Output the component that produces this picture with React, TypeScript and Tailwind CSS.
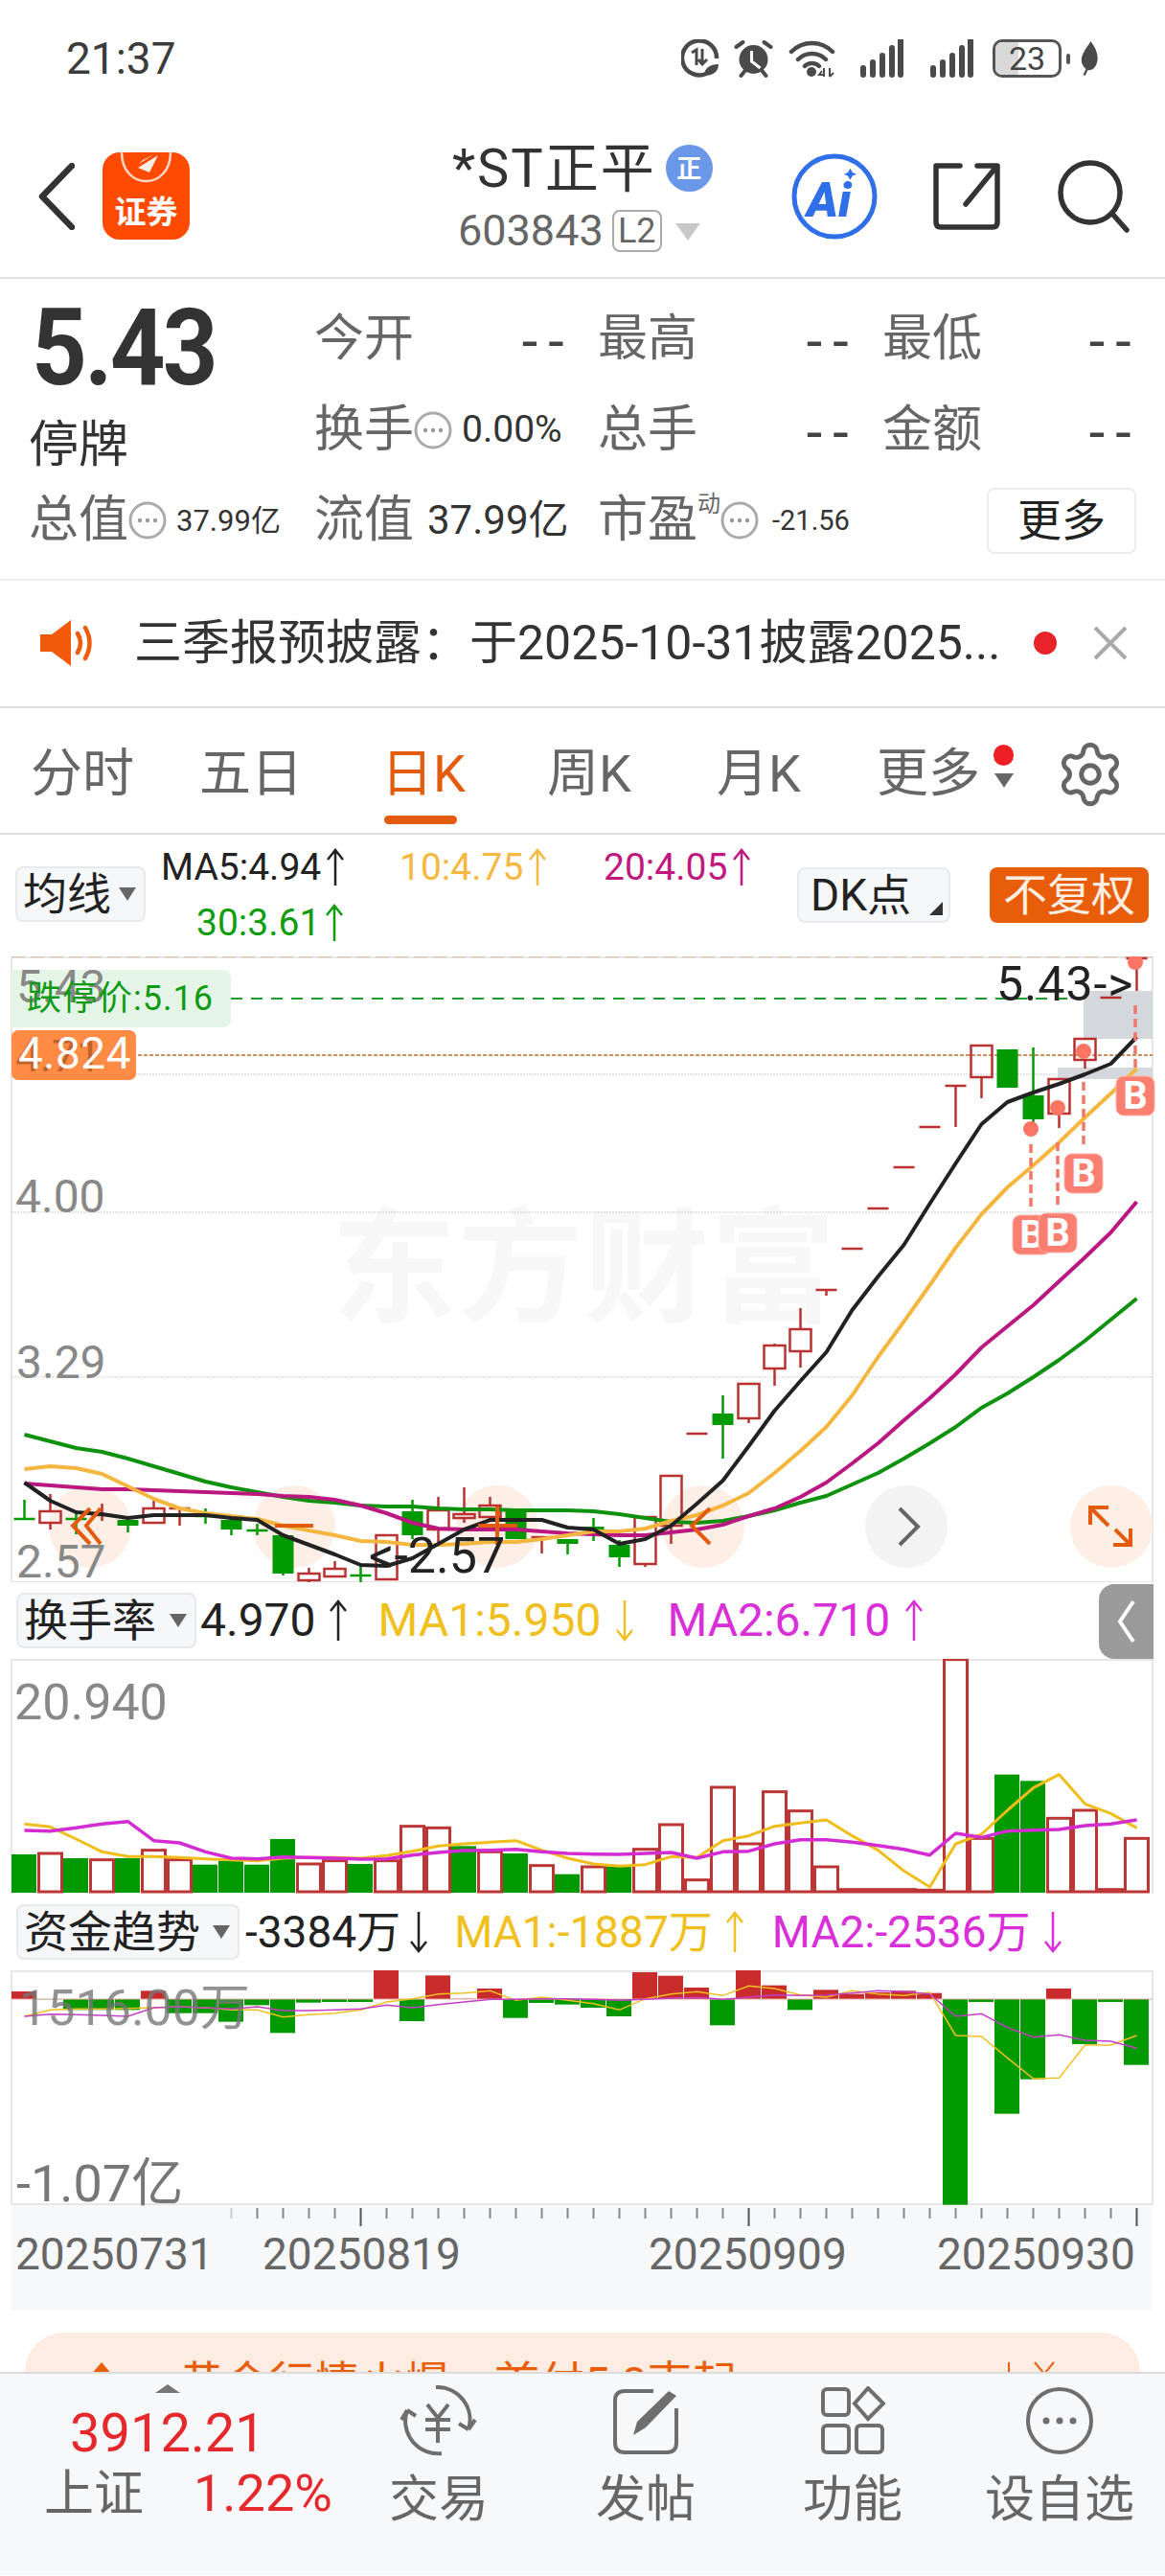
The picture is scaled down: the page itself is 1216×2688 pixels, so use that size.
import { Settings } from "lucide-react";

const RED = "#b83232";
const GREEN = "#009900";
const cx = (i: number) => 25.5 + 27 * i;
const line = (ys: number[]) => ys.map((y, i) => `${cx(i)},${y}`).join(" ");

// body top, body bottom, wick top, wick bottom, colour
const candles: [number, number, number, number, "r" | "g"][] = [
  [1586, 1586, 1566, 1586, "g"], [1578, 1590, 1560, 1597, "r"], [1586, 1586, 1577, 1602, "g"], [1582, 1582, 1570, 1588, "r"],
  [1587, 1593, 1587, 1600, "g"], [1575, 1590, 1567, 1590, "r"], [1575, 1577, 1575, 1593, "r"], [1583, 1583, 1575, 1591, "g"],
  [1587, 1597, 1587, 1603, "g"], [1598, 1598, 1591, 1603, "g"], [1603, 1643, 1603, 1645, "g"], [1643, 1650, 1637, 1653, "r"],
  [1638, 1646, 1630, 1646, "r"], [1645, 1645, 1635, 1653, "g"], [1603, 1649, 1603, 1649, "r"], [1578, 1603, 1566, 1607, "g"],
  [1577, 1597, 1563, 1612, "r"], [1581, 1585, 1553, 1590, "r"], [1572, 1584, 1563, 1584, "r"], [1577, 1607, 1577, 1607, "g"],
  [1605, 1605, 1605, 1622, "r"], [1607, 1612, 1607, 1623, "g"], [1594, 1598, 1585, 1609, "g"], [1613, 1626, 1608, 1636, "g"],
  [1584, 1633, 1584, 1636, "r"], [1541, 1593, 1541, 1612, "r"], [1497, 1497, 1497, 1497, "r"], [1476, 1488, 1457, 1523, "g"],
  [1445, 1481, 1445, 1486, "r"], [1405, 1429, 1403, 1447, "r"], [1388, 1411, 1366, 1428, "r"], [1347, 1347, 1347, 1353, "r"],
  [1304, 1304, 1304, 1304, "r"], [1262, 1262, 1262, 1262, "r"], [1219, 1219, 1219, 1219, "r"], [1177, 1177, 1177, 1177, "r"],
  [1134, 1134, 1134, 1177, "r"], [1092, 1125, 1092, 1147, "r"], [1096, 1136, 1096, 1136, "g"], [1144, 1169, 1094, 1180, "g"],
  [1127, 1163, 1127, 1178, "r"], [1085, 1107, 1085, 1116, "r"], [1042, 1042, 1042, 1042, "r"], [1001, 1001, 1001, 1035, "r"],
];

const ma5 = [1548, 1567, 1579, 1581, 1585, 1582, 1582, 1582, 1585, 1587, 1603, 1613, 1623, 1634, 1635, 1627, 1612, 1597, 1587, 1587, 1587, 1595, 1597, 1612, 1607, 1593, 1570, 1546, 1510, 1473, 1442, 1412, 1368, 1333, 1300, 1257, 1215, 1174, 1151, 1141, 1132, 1122, 1111, 1083];
const ma10 = [1534, 1531, 1533, 1539, 1552, 1565, 1575, 1580, 1583, 1586, 1593, 1598, 1603, 1609, 1610, 1613, 1613, 1612, 1610, 1610, 1607, 1603, 1599, 1599, 1596, 1588, 1582, 1572, 1559, 1538, 1515, 1490, 1457, 1417, 1380, 1342, 1303, 1268, 1240, 1217, 1193, 1167, 1142, 1116];
const ma20 = [1549, 1551, 1553, 1555, 1555, 1556, 1557, 1558, 1559, 1560, 1562, 1563, 1566, 1572, 1580, 1590, 1596, 1597, 1597, 1597, 1599, 1601, 1602, 1603, 1603, 1600, 1597, 1592, 1583, 1575, 1563, 1548, 1528, 1507, 1483, 1460, 1435, 1407, 1385, 1363, 1338, 1313, 1287, 1255];
const ma30 = [1498, 1505, 1512, 1516, 1523, 1531, 1539, 1547, 1553, 1558, 1563, 1567, 1569, 1572, 1573, 1573, 1575, 1576, 1576, 1577, 1577, 1577, 1578, 1581, 1585, 1589, 1590, 1588, 1583, 1577, 1569, 1562, 1550, 1538, 1523, 1507, 1490, 1470, 1455, 1438, 1420, 1400, 1378, 1356];

const volBars: [number, "r" | "g"][] = [
  [858, "g"], [855, "r"], [870, "g"], [875, "r"], [870, "g"], [845, "r"], [875, "r"], [890, "g"], [878, "g"], [890, "g"], [810, "g"],
  [888, "r"], [878, "r"], [888, "g"], [878, "r"], [770, "r"], [775, "r"], [832, "g"], [850, "r"], [855, "g"], [893, "r"], [920, "g"],
  [897, "r"], [895, "g"], [842, "r"], [765, "r"], [938, "r"], [648, "r"], [825, "r"], [662, "r"], [722, "r"], [897, "r"], [968, "r"],
  [968, "r"], [968, "r"], [970, "r"], [248, "r"], [808, "r"], [608, "g"], [628, "g"], [745, "r"], [720, "r"], [968, "r"], [808, "r"],
];
const volY = [763, 772, 810, 850, 865, 865, 868, 872, 875, 878, 870, 868, 868, 870, 862, 848, 832, 825, 820, 815, 845, 870, 888, 895, 890, 865, 868, 815, 800, 770, 760, 750, 800, 845, 910, 960, 825, 795, 720, 650, 608, 700, 730, 775];
const volM = [783, 785, 775, 763, 755, 815, 822, 850, 870, 872, 866, 868, 870, 873, 872, 860, 852, 846, 845, 842, 850, 855, 857, 858, 855, 852, 870, 850, 848, 825, 812, 812, 820, 830, 842, 860, 792, 805, 785, 782, 780, 768, 763, 750];

const fundBars = [267, 292, 325, 325, 325, 265, 335, 335, 362, 310, 397, 302, 300, 300, 200, 360, 217, 290, 258, 350, 303, 308, 318, 345, 207, 218, 255, 373, 200, 248, 325, 262, 275, 270, 265, 272, 935, 300, 650, 542, 258, 432, 300, 497];
const fundY = [345, 325, 322, 322, 320, 318, 315, 318, 325, 325, 347, 340, 335, 325, 300, 290, 275, 272, 265, 295, 285, 295, 305, 325, 290, 275, 268, 280, 250, 258, 278, 285, 265, 275, 280, 270, 405, 408, 475, 540, 538, 435, 435, 405];
const fundM = [345, 338, 340, 342, 345, 318, 315, 318, 322, 315, 327, 327, 325, 322, 310, 318, 308, 300, 292, 292, 290, 290, 292, 295, 292, 288, 286, 292, 285, 278, 280, 278, 272, 265, 268, 275, 345, 337, 380, 410, 403, 420, 423, 445];

function Arrow({ color, down, h = 40, className }: { color: string; down?: boolean; h?: number; className?: string }) {
  return (
    <svg width="22" height={h} viewBox={`0 0 22 ${h}`} className={`shrink-0 ${className ?? ""}`}>
      <path
        d={down ? `M11 1V${h - 2}M3 ${h - 12}L11 ${h - 2}L19 ${h - 12}` : `M11 ${h - 1}V2M3 12L11 2L19 12`}
        fill="none"
        stroke={color}
        strokeWidth="2.5"
      />
    </svg>
  );
}

function Info() {
  return (
    <svg width="40" height="46" viewBox="0 0 40 46" className="shrink-0">
      <ellipse cx="20" cy="23" rx="18" ry="18" fill="none" stroke="#aaa" strokeWidth="3" />
      <circle cx="12" cy="23" r="2.2" fill="#999" />
      <circle cx="20" cy="23" r="2.2" fill="#999" />
      <circle cx="28" cy="23" r="2.2" fill="#999" />
    </svg>
  );
}

function Dashes() {
  return <span className="font-['Liberation_Sans',sans-serif] text-[58px] leading-none tracking-[8px] text-[#444] -mr-[8px]">--</span>;
}

function Signal() {
  return (
    <svg width="49" height="40" viewBox="0 0 47 40">
      {[[4, 30], [14, 24], [24, 17], [34, 9], [43, 1]].map(([x, y]) => (
        <path key={x} d={`M${x} ${y}V37`} stroke="#4a4a4a" strokeWidth="6" strokeLinecap="round" />
      ))}
    </svg>
  );
}

function StatusBar() {
  return (
    <div className="flex h-[100px] items-start justify-between pl-[69px] pr-[69px] pt-[41px]">
      <span className="text-[46px] leading-[41px] text-[#3c3c3c]">21:37</span>
      <div className="flex items-center">
        <svg width="40" height="40" viewBox="0 0 40 40">
          <path d="M26 36A18 18 0 1 1 37 20" fill="none" stroke="#4a4a4a" strokeWidth="4.5" />
          <path d="M11 14l5-3v16M22 10v16M18 21l4 5 5-5" fill="none" stroke="#4a4a4a" strokeWidth="3" />
          <path d="M24 38c0-8 6-12 15-12 0 8-6 12-15 12z" fill="#4a4a4a" />
        </svg>
        <svg width="41" height="40" viewBox="0 0 40 40" className="ml-[15px]">
          <circle cx="20" cy="21" r="15" fill="#4a4a4a" />
          <path d="M18 12V23L27 30" fill="none" stroke="#fff" strokeWidth="3" />
          <path d="M2 8l7-5M38 8l-7-5M7 38l4-5M33 38l-4-5" stroke="#4a4a4a" strokeWidth="4" strokeLinecap="round" />
        </svg>
        <svg width="49" height="40" viewBox="0 0 47 40" className="ml-[16px]">
          <path d="M2 13C14 1 33 1 45 13M9 21C17 13 30 13 38 21M16 28C20 24 27 24 31 28" fill="none" stroke="#4a4a4a" strokeWidth="4.5" strokeLinecap="round" />
          <circle cx="23" cy="34" r="5" fill="#4a4a4a" />
          <path d="M34 33l-3 4h4M36 30v9M42 30v9M42 39l4-4" fill="none" stroke="#4a4a4a" strokeWidth="2" />
        </svg>
        <div className="ml-[24px] flex">
          <Signal />
        </div>
        <div className="ml-[24px] flex">
          <Signal />
        </div>
        <div className="relative ml-[18px] flex h-[40px] w-[72px] items-center justify-center overflow-hidden rounded-[10px] border-[3px] border-[#555]">
          <div className="absolute inset-y-0 left-0 w-[24px] bg-[#d9d9d9]" />
          <span className="relative text-[34px] leading-none text-[#444]">23</span>
        </div>
        <div className="ml-[5px] h-[11px] w-[4px] rounded-full bg-[#555]" />
        <svg width="20" height="36" viewBox="0 0 19 36" className="ml-[10px]">
          <path d="M11 0C17 8 20 16 17 24C15 29 11 31 8 30L5 36L3 35L6 29C1 25 0 19 3 13C5 8 8 5 11 0Z" fill="#4a4a4a" />
        </svg>
      </div>
    </div>
  );
}

function Header() {
  return (
    <div className="flex h-[191px] items-center border-b-2 border-[#e3e3e3] pt-[20px]">
      <svg width="38" height="70" viewBox="0 0 38 70" className="ml-[40px]">
        <path d="M35 3L4 35L35 67" fill="none" stroke="#333" strokeWidth="6.5" strokeLinecap="round" strokeLinejoin="round" />
      </svg>
      <div className="relative ml-[29px] flex h-[91px] w-[91px] items-end justify-center overflow-hidden rounded-[18px] bg-[#ff4a00] pb-[12px] text-[33px] font-bold leading-none text-white">
        <svg width="91" height="40" viewBox="0 0 91 40" className="absolute left-0 top-0">
          <path d="M20 0C20 40 71 40 71 0" fill="none" stroke="#ffd9c7" strokeWidth="2.5" />
          <path d="M37 16L58 3L49 21ZM42 8L54 2L38 12Z" fill="#fff" opacity="0.9" />
        </svg>
        证券
      </div>
      <div className="ml-[274px] flex w-[275px] flex-col">
        <div className="flex items-center">
          <span className="text-[56px] leading-[60px] tracking-[2px] text-[#333]">*ST正平</span>
          <span className="ml-[10px] flex h-[49px] w-[49px] items-center justify-center rounded-full bg-[#6b97e8] text-[26px] font-bold leading-none text-white">正</span>
        </div>
        <div className="mt-[12px] flex items-center pl-[6px]">
          <span className="text-[45px] leading-[46px] text-[#666]">603843</span>
          <span className="ml-[9px] flex h-[44px] w-[52px] items-center justify-center rounded-[8px] border-2 border-[#aaa] text-[36px] leading-none text-[#666]">L2</span>
          <svg width="26" height="18" viewBox="0 0 26 18" className="ml-[14px] mt-[2px]">
            <path d="M0 0H26L13 18Z" fill="#c8c8c8" />
          </svg>
        </div>
      </div>
      <svg width="92" height="92" viewBox="0 0 92 92" className="ml-[78px]">
        <circle cx="46" cy="46" r="42" fill="none" stroke="#2f6fe8" strokeWidth="5" />
        <text x="17" y="67" fontSize="50" fontWeight="900" fontStyle="italic" fill="#2f6fe8" fontFamily="Roboto, sans-serif">Ai</text>
        <path d="M64 18L68 25L75 28L68 31L64 38L60 31L53 28L60 25Z" fill="#2f6fe8" transform="translate(24 6) scale(0.6)" />
      </svg>
      <svg width="73" height="72" viewBox="0 0 73 72" className="ml-[55px]">
        <path d="M30 4H5V63Q5 68 10 68H64Q69 68 69 63V4H48M68 5L36 44" fill="none" stroke="#333" strokeWidth="5.5" strokeLinecap="round" strokeLinejoin="round" />
      </svg>
      <svg width="78" height="76" viewBox="0 0 78 76" className="ml-[58px]">
        <circle cx="35" cy="34" r="31" fill="none" stroke="#333" strokeWidth="5.5" />
        <path d="M58 56L73 73" stroke="#333" strokeWidth="5.5" strokeLinecap="round" />
      </svg>
    </div>
  );
}

function Quote() {
  const label = "text-[52px] leading-none text-[#666]";
  return (
    <div className="grid h-[315px] grid-cols-[298px_296px_297px_265px] grid-rows-[94px_95px_94px] border-b-2 border-[#efefef] pl-[30px] pt-[16px]">
      <div className="row-span-2 flex flex-col">
        <span className="ml-[3px] mt-[6px] origin-left scale-x-[0.9] text-[112px] font-bold leading-[100px] tracking-[-3px] text-[#333]">5.43</span>
        <span className="mt-[22px] text-[52px] leading-[60px] text-[#333]">停牌</span>
      </div>
      <div className="flex w-[262px] items-center justify-between">
        <span className={label}>今开</span>
        <Dashes />
      </div>
      <div className="flex w-[263px] items-center justify-between">
        <span className={label}>最高</span>
        <Dashes />
      </div>
      <div className="flex w-[261px] items-center justify-between">
        <span className={label}>最低</span>
        <Dashes />
      </div>
      <div className="col-start-2 flex w-[264px] items-center">
        <span className={label}>换手</span>
        <Info />
        <span className="ml-[10px] text-[39px] leading-none text-[#333]">0.00%</span>
      </div>
      <div className="flex w-[263px] items-center justify-between">
        <span className={label}>总手</span>
        <Dashes />
      </div>
      <div className="flex w-[261px] items-center justify-between">
        <span className={label}>金额</span>
        <Dashes />
      </div>
      <div className="flex items-center">
        <span className={label}>总值</span>
        <Info />
        <span className="ml-[10px] text-[31px] leading-none text-[#333]">37.99亿</span>
      </div>
      <div className="flex items-center">
        <span className={label}>流值</span>
        <span className="ml-[14px] text-[42px] leading-none text-[#333]">37.99亿</span>
      </div>
      <div className="flex items-center">
        <span className={label}>市盈</span>
        <span className="mb-[34px] text-[24px] leading-none text-[#666]">动</span>
        <Info />
        <span className="ml-[14px] text-[29px] leading-none text-[#333]">-21.56</span>
      </div>
      <div className="flex items-center justify-end">
        <span className="flex h-[69px] w-[156px] items-center justify-center rounded-[8px] border-2 border-[#ececec] text-[46px] leading-none text-[#222]">更多</span>
      </div>
    </div>
  );
}

function Notice() {
  return (
    <div className="flex h-[133px] items-center border-b-2 border-[#dedede] pb-[2px]">
      <svg width="58" height="50" viewBox="0 0 58 50" className="ml-[42px]">
        <path d="M0 16H12L32 1V49L12 34H0Z" fill="#f15a0a" />
        <path d="M39 15Q45 25 39 35M47 9Q56 25 47 41" fill="none" stroke="#f15a0a" strokeWidth="4.5" strokeLinecap="round" />
      </svg>
      <span className="ml-[40px] w-[939px] whitespace-nowrap text-[50px] leading-none text-[#333]">三季报预披露：于2025-10-31披露2025...</span>
      <span className="mr-[37px] h-[24px] w-[24px] rounded-full bg-[#e8232a]" />
      <svg width="38" height="38" viewBox="0 0 38 38">
        <path d="M3 3L35 35M35 3L3 35" stroke="#aaa" strokeWidth="4" />
      </svg>
    </div>
  );
}

function Tabs() {
  const tab = "text-[54px] leading-none text-[#666]";
  return (
    <div className="flex h-[132px] items-center border-b-2 border-[#dedede] pl-[32px] pt-[8px]">
      <span className={`${tab} w-[176px]`}>分时</span>
      <span className={`${tab} w-[190px]`}>五日</span>
      <span className="relative w-[173px] text-[54px] leading-none text-[#e35b0c]">
        日K
        <span className="absolute left-[3px] top-[70px] h-[9px] w-[76px] rounded-full bg-[#e35b0c]" />
      </span>
      <span className={`${tab} w-[177px]`}>周K</span>
      <span className={`${tab} w-[167px]`}>月K</span>
      <span className={`${tab} w-[122px]`}>更多</span>
      <span className="mb-[18px] flex w-[21px] flex-col items-center">
        <span className="mb-[8px] h-[22px] w-[21px] rounded-full bg-[#ee2024]" />
        <svg width="20" height="15" viewBox="0 0 20 15">
          <path d="M0 0H20L10 15Z" fill="#666" />
        </svg>
      </span>
      <Settings size={74} strokeWidth={1.6} color="#666" className="ml-[43px]" />
    </div>
  );
}

function Dropdown({ label, w }: { label: string; w: string }) {
  return (
    <div className={`flex h-[58px] items-center justify-between rounded-[8px] border-2 border-[#e8e9ec] bg-[#f6f7f9] pl-[6px] pr-[8px] ${w}`}>
      <span className="text-[46px] leading-none text-[#222]">{label}</span>
      <svg width="18" height="14" viewBox="0 0 18 14">
        <path d="M0 0H18L9 14Z" fill="#666" />
      </svg>
    </div>
  );
}

function MaLegend() {
  return (
    <div className="flex h-[127px] pl-[16px]">
      <div className="mt-[33px]">
        <Dropdown label="均线" w="w-[136px]" />
      </div>
      <div className="ml-[16px] mt-[14px] flex w-[664px] flex-col gap-[18px] text-[39px] leading-[40px]">
        <div className="flex">
          <span className="flex w-[249px] items-center text-[#222]">MA5:4.94<Arrow color="#222" className="ml-[4px]" /></span>
          <span className="flex w-[213px] items-center text-[#f5b942]">10:4.75<Arrow color="#f5b942" className="ml-[4px]" /></span>
          <span className="flex items-center text-[#c0187e]">20:4.05<Arrow color="#c0187e" className="ml-[4px]" /></span>
        </div>
        <div className="ml-[37px] flex">
          <span className="flex items-center text-[#0f9d0f]">30:3.61<Arrow color="#0f9d0f" className="ml-[4px]" /></span>
        </div>
      </div>
      <div className="relative mt-[34px] flex h-[58px] w-[160px] items-center rounded-[8px] border-2 border-[#e8e9ec] bg-[#f6f7f9] pl-[12px] text-[46px] leading-none text-[#222]">
        DK点
        <svg width="14" height="14" viewBox="0 0 14 14" className="absolute bottom-[6px] right-[6px]">
          <path d="M14 0V14H0Z" fill="#333" />
        </svg>
      </div>
      <div className="ml-[41px] mt-[34px] flex h-[58px] w-[166px] items-center justify-center rounded-[8px] bg-[#e85d0a] text-[46px] leading-none text-[#fdeee3]">不复权</div>
    </div>
  );
}

function MainChart() {
  const badges = [
    { x: 1076, dotY: 1179, dash: [1195, 1263], box: [1057, 1269] },
    { x: 1104, dotY: 1157, dash: [1193, 1262], box: [1084, 1267] },
    { x: 1131, dotY: 1098, dash: [1130, 1198], box: [1111, 1205] },
    { x: 1185, dotY: 1005, dash: [1050, 1117], box: [1165, 1124] },
  ];
  return (
    <div className="relative h-[653px] w-full">
      <span className="absolute left-[346px] top-[252px] whitespace-nowrap text-[130px] font-bold leading-[150px] tracking-[2px] text-[#f7f7f7]">东方财富</span>
      <svg viewBox="0 999 1216 653" className="absolute inset-0 h-full w-full">
        <path d="M12 1652V1000H1203V1652H12" fill="none" stroke="#e6e6e6" strokeWidth="2" />
        <path d="M12 999.5H1203" stroke="#d9c4b0" strokeWidth="1.5" strokeDasharray="14 6" />
        {[1122, 1266, 1438].map((y) => (
          <path key={y} d={`M12 ${y}H1203`} stroke="#cfcfcf" strokeWidth="1" strokeDasharray="2 1" />
        ))}
        <path d="M241 1043H1203" stroke="#1e9a2e" strokeWidth="2" strokeDasharray="12 9" />
        <path d="M12 1102H1203" stroke="#c0692a" strokeWidth="1.5" strokeDasharray="4 2" />
        <rect x="1131" y="1035" width="72" height="50" fill="#d4d7dc" />
        <rect x="1104" y="1115" width="99" height="12" fill="#d4d7dc" />
        {[94, 307, 519, 734, 1160].map((x) => (
          <circle key={x} cx={x} cy="1594" r="43" fill="#fdeee6" />
        ))}
        <circle cx="946" cy="1594" r="43" fill="#f3f3f3" />
        {candles.map(([top, bottom, hi, lo, c], i) => {
          const x = cx(i);
          const stroke = c === "r" ? RED : GREEN;
          const flat = bottom - top < 3;
          return (
            <g key={i}>
              {hi < top && <path d={`M${x} ${hi}V${top}`} stroke={stroke} strokeWidth="2.5" />}
              {lo > bottom && <path d={`M${x} ${bottom}V${lo}`} stroke={stroke} strokeWidth="2.5" />}
              {flat ? (
                <path d={`M${x - 11} ${top}H${x + 11}`} stroke={stroke} strokeWidth="2.5" />
              ) : c === "r" ? (
                <rect x={x - 11} y={top} width="22" height={bottom - top} fill="none" stroke={stroke} strokeWidth="2.5" />
              ) : (
                <rect x={x - 11} y={top} width="22" height={bottom - top} fill={stroke} />
              )}
            </g>
          );
        })}
        <polyline points={line(ma30)} fill="none" stroke="#0e920e" strokeWidth="4" strokeLinejoin="round" />
        <polyline points={line(ma20)} fill="none" stroke="#ba1780" strokeWidth="4" strokeLinejoin="round" />
        <polyline points={line(ma10)} fill="none" stroke="#f5b63f" strokeWidth="4" strokeLinejoin="round" />
        <polyline points={line(ma5)} fill="none" stroke="#222" strokeWidth="4" strokeLinejoin="round" />
        {badges.map((b) => (
          <g key={b.x}>
            <circle cx={b.x} cy={b.dotY} r="8" fill="#fb7464" />
            <path d={`M${b.x} ${b.dash[0]}V${b.dash[1]}`} stroke="#f2786a" strokeWidth="3.5" strokeDasharray="9 5" />
            <rect x={b.box[0]} y={b.box[1]} width="40" height="41" rx="8" fill="#fb7f70" stroke="#ffb3a8" strokeWidth="1" />
            <text x={b.box[0] + 20} y={b.box[1] + 34} textAnchor="middle" fontSize="40" fontWeight="700" fill="#fff" fontFamily="Roboto, sans-serif">B</text>
          </g>
        ))}
        <path d="M94 1575L76 1593L94 1612M105 1575L90 1593L105 1612" fill="none" stroke="#e35b0c" strokeWidth="4" />
        <path d="M287 1593H327M499 1593H540M519 1573V1613" stroke="#e35b0c" strokeWidth="4" />
        <path d="M741 1575L722 1593L741 1612" fill="none" stroke="#e35b0c" strokeWidth="4" />
        <path d="M939 1575L958 1594L939 1613" fill="none" stroke="#666" strokeWidth="4" />
        <path d="M1138 1592V1574H1157M1139 1575L1157 1593M1180 1596V1613H1162M1179 1612L1164 1597" fill="none" stroke="#e35b0c" strokeWidth="4" />
      </svg>
      <div className="absolute left-[12px] top-[14px] h-[60px] w-[229px] rounded-[8px] rounded-l-none bg-[#e4f4e6]" />
      <span className="absolute left-[17px] top-[8px] text-[48px] leading-none text-[#888]">5.43</span>
      <span className="absolute left-[28px] top-[26px] text-[36px] leading-none tracking-[1px] text-[#0f9a14]">跌停价:5.16</span>
      <div className="absolute left-[12px] top-[77px] h-[52px] w-[130px] rounded-[7px] bg-[#ff8b45]">
        <span className="absolute left-[4px] top-[4px] text-[46px] leading-none text-[#c0632a]">4.71</span>
        <span className="absolute left-[7px] top-[1px] text-[46px] leading-none tracking-[0.5px] text-white">4.824</span>
      </div>
      <span className="absolute left-[16px] top-[227px] text-[48px] leading-none text-[#888]">4.00</span>
      <span className="absolute left-[17px] top-[400px] text-[48px] leading-none text-[#888]">3.29</span>
      <span className="absolute left-[17px] top-[608px] text-[48px] leading-none text-[#888]">2.57</span>
      <span className="absolute left-[1040px] top-[4px] text-[50px] leading-none tracking-[1px] text-[#222]">5.43-&gt;</span>
      <span className="absolute left-[385px] top-[600px] text-[52px] leading-none text-[#222]">&lt;-2.57</span>
    </div>
  );
}

function VolLegend() {
  return (
    <div className="relative flex h-[80px] items-center pl-[17px] text-[48px] leading-none">
      <Dropdown label="换手率" w="w-[188px]" />
      <span className="ml-[4px] flex items-center text-[#222]">4.970<Arrow color="#222" h={44} className="ml-[12px]" /></span>
      <span className="ml-[31px] flex items-center text-[#f0c020]">MA1:5.950<Arrow color="#f0c020" down h={44} className="ml-[14px]" /></span>
      <span className="ml-[33px] flex items-center text-[#d92fd9]">MA2:6.710<Arrow color="#d92fd9" h={44} className="ml-[14px]" /></span>
      <div className="absolute bottom-0 left-[1147px] top-[2px] flex w-[57px] items-center justify-center rounded-l-[16px] bg-[#9a9a9a]">
        <svg width="22" height="48" viewBox="0 0 22 48">
          <path d="M18 3L4 24L18 45" fill="none" stroke="#fff" strokeWidth="4" />
        </svg>
      </div>
    </div>
  );
}

function VolChart() {
  const y = (z: number) => 1650 + z / 3;
  return (
    <div className="relative h-[245px] w-full">
      <svg viewBox="0 1732 1216 245" className="absolute inset-0 h-full w-full">
        <path d="M12 1977V1733H1203V1977" fill="none" stroke="#e6e6e6" strokeWidth="2" />
        {volBars.map(([z, c], i) =>
          c === "g" ? (
            <rect key={i} x={12 + 27 * i} y={y(z)} width="26" height={1976 - y(z)} fill={GREEN} />
          ) : (
            <rect key={i} x={13.5 + 27 * i} y={y(z)} width="24" height={1975 - y(z)} fill="#fff" stroke="#bd3636" strokeWidth="3" />
          ),
        )}
        <polyline points={line(volY.map(y))} fill="none" stroke="#f0bd1a" strokeWidth="3" strokeLinejoin="round" />
        <polyline points={line(volM.map(y))} fill="none" stroke="#d22cd2" strokeWidth="3.5" strokeLinejoin="round" />
      </svg>
      <span className="absolute left-[15px] top-[20px] text-[52px] leading-none text-[#888]">20.940</span>
    </div>
  );
}

function FundLegend() {
  return (
    <div className="flex h-[80px] items-center pl-[17px] text-[46px] leading-none">
      <Dropdown label="资金趋势" w="w-[233px]" />
      <span className="ml-[6px] flex items-center text-[#222]">-3384万<Arrow color="#222" down h={44} className="ml-[8px]" /></span>
      <span className="ml-[26px] flex items-center text-[#f0c020]">MA1:-1887万<Arrow color="#f0c020" h={44} className="ml-[12px]" /></span>
      <span className="ml-[28px] flex items-center text-[#d92fd9]">MA2:-2536万<Arrow color="#d92fd9" down h={44} className="ml-[12px]" /></span>
    </div>
  );
}

function FundChart() {
  const y = (z: number) => 1990 + z / 3;
  return (
    <div className="relative h-[245px] w-full">
      <svg viewBox="0 2057 1216 245" className="absolute inset-0 h-full w-full">
        <path d="M12 2301V2058H1203V2301H12" fill="none" stroke="#e6e6e6" strokeWidth="2" />
        {fundBars.map((z, i) => {
          const top = Math.min(y(z), 2087);
          const h = Math.abs(y(z) - 2087);
          return <rect key={i} x={12 + 27 * i} y={top} width="26" height={h} fill={z < 292 ? "#c92a2a" : GREEN} />;
        })}
        <path d="M12 2087H1203" stroke="#e9a9a2" strokeWidth="1" />
        <polyline points={line(fundY.map(y))} fill="none" stroke="#f0c020" strokeWidth="1.5" />
        <polyline points={line(fundM.map(y))} fill="none" stroke="#c53dc5" strokeWidth="1.5" />
      </svg>
      <span className="absolute left-[20px] top-[14px] text-[52px] leading-none text-[#777]/80">1516.00万</span>
      <span className="absolute left-[17px] top-[196px] text-[54px] leading-none text-[#777]">-1.07亿</span>
    </div>
  );
}

function DateAxis() {
  const ticks = Array.from({ length: 36 }, (_, i) => i + 8);
  return (
    <div className="mx-[12px] h-[110px] w-[1191px] bg-[#f7f8fa]">
      <svg viewBox="12 2302 1191 24" className="block h-[24px] w-full">
        {ticks.map((i) => {
          const major = i === 13 || i === 28 || i === 43;
          return <path key={i} d={`M${cx(i)} 2305V${major ? 2324 : 2316}`} stroke={major ? "#555" : i < 9 ? "#ccc" : "#888"} strokeWidth="2" />;
        })}
      </svg>
      <div className="relative mt-[4px] text-[46px] leading-none text-[#666]">
        <div className="flex">
          <span className="ml-[4px] w-[258px]">20250731</span>
          <span className="w-[403px]">20250819</span>
          <span className="w-[301px]">20250909</span>
          <span>20250930</span>
        </div>
      </div>
    </div>
  );
}

function PromoCard() {
  return (
    <div className="mx-[26px] mt-[23px] flex h-[41px] w-[1164px] items-start overflow-hidden rounded-t-[42px] bg-[#fdece2] pt-[29px]">
      <svg width="30" height="30" viewBox="0 0 30 30" className="ml-[66px] mt-[2px]">
        <path d="M14 0L26 14H2Z" fill="#e85d0a" />
      </svg>
      <span className="ml-[65px] whitespace-nowrap text-[47px] leading-none text-[#e85d0a]">黄金行情火爆，首付5.8克起</span>
      <svg width="70" height="30" viewBox="0 0 70 30" className="ml-[283px]">
        <path d="M1 2V30M28 2L38 14L48 2" fill="none" stroke="#e85d0a" strokeWidth="2" />
      </svg>
    </div>
  );
}

function BottomBar() {
  const label = "mt-[20px] text-[52px] leading-none text-[#666]";
  const stroke = { fill: "none", stroke: "#6e6e6e", strokeWidth: 4 };
  return (
    <div className="flex h-[212px] border-t-2 border-[#dcdcdc] bg-[#f7f8fa]">
      <div className="relative w-[350px]">
        <svg width="26" height="9" viewBox="0 0 26 9" className="absolute left-[162px] top-[11px]">
          <path d="M0 9H26L13 0Z" fill="#777" />
        </svg>
        <span className="absolute left-[73px] top-[34px] text-[56px] leading-[56px] text-[#e5282c]">3912.21</span>
        <span className="absolute left-[46px] top-[100px] text-[52px] leading-none text-[#666]">上证</span>
        <span className="absolute left-[202px] top-[98px] text-[54px] leading-none text-[#e5282c]">1.22%</span>
      </div>
      <div className="flex w-[216px] flex-col items-center pt-[12px]">
        <svg width="82" height="74" viewBox="0 0 82 74" {...stroke}>
          <path d="M38 2A34 34 0 0 1 72 46M72 46L79 36M72 46L62 40M44 71A34 34 0 0 1 8 26M8 26L2 36M8 26L17 32" />
          <path d="M29 20L40 34L51 20M27 36H53M27 46H53M40 34V60" />
        </svg>
        <span className={label}>交易</span>
      </div>
      <div className="flex w-[216px] flex-col items-center pt-[14px]">
        <svg width="72" height="72" viewBox="0 0 72 72" {...stroke}>
          <path d="M44 4H14Q4 4 4 14V58Q4 68 14 68H58Q68 68 68 58V22" />
          <path d="M23 50L27 36L60 4L68 9L36 42Z" fill="#6e6e6e" stroke="none" />
        </svg>
        <span className={label}>发帖</span>
      </div>
      <div className="flex w-[216px] flex-col items-center pt-[13px]">
        <svg width="68" height="73" viewBox="0 0 68 73" {...stroke}>
          <rect x="3" y="3" width="27" height="27" rx="4" />
          <path d="M50 2L66 18L50 34L36 18Z" />
          <rect x="3" y="41" width="27" height="28" rx="4" />
          <rect x="38" y="41" width="27" height="28" rx="4" />
        </svg>
        <span className={label}>功能</span>
      </div>
      <div className="flex w-[216px] flex-col items-center pt-[13px]">
        <svg width="72" height="73" viewBox="0 0 72 73" {...stroke}>
          <circle cx="36" cy="36" r="33" />
          <circle cx="22" cy="36" r="3.5" fill="#6e6e6e" stroke="none" />
          <circle cx="36" cy="36" r="3.5" fill="#6e6e6e" stroke="none" />
          <circle cx="50" cy="36" r="3.5" fill="#6e6e6e" stroke="none" />
        </svg>
        <span className={label}>设自选</span>
      </div>
    </div>
  );
}

export default function App() {
  return (
    <div className="h-[2688px] w-[1216px] overflow-hidden bg-white font-['Roboto','Noto_Sans_CJK_SC',sans-serif]">
      <StatusBar />
      <Header />
      <Quote />
      <Notice />
      <Tabs />
      <MaLegend />
      <MainChart />
      <VolLegend />
      <VolChart />
      <FundLegend />
      <FundChart />
      <DateAxis />
      <PromoCard />
      <BottomBar />
    </div>
  );
}
